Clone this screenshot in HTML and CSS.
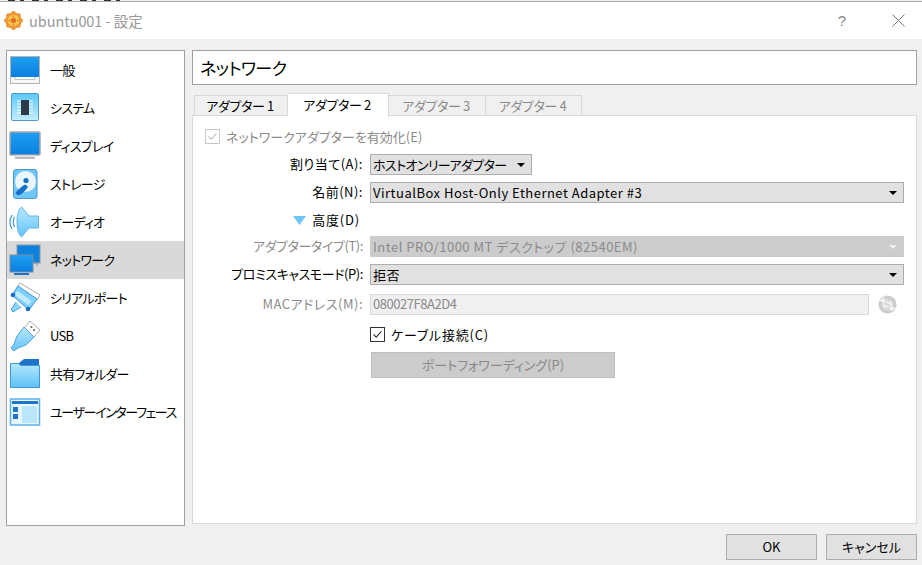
FILE: index.html
```html
<!DOCTYPE html>
<html lang="ja">
<head>
<meta charset="utf-8">
<title>ubuntu001 - 設定</title>
<link rel="stylesheet" href="styles.css">
</head>
<body>
<svg class="defs" width="0" height="0">
  <defs>
    <linearGradient id="screen" x1="0" y1="0" x2="0" y2="1"><stop offset="0" stop-color="#1f9ff2"/><stop offset="1" stop-color="#0a7ee0"/></linearGradient>
    <linearGradient id="light" x1="0" y1="0" x2="0" y2="1"><stop offset="0" stop-color="#5cc8fb"/><stop offset="1" stop-color="#c4edff"/></linearGradient>
    <linearGradient id="cone" x1="0" y1="0" x2="0" y2="1"><stop offset="0" stop-color="#b8e8ff"/><stop offset="1" stop-color="#62c4f8"/></linearGradient>
    <linearGradient id="folder" x1="0" y1="0" x2="0" y2="1"><stop offset="0" stop-color="#b5e8ff"/><stop offset="1" stop-color="#5cc2f6"/></linearGradient>
  </defs>
</svg>
<div class="window">
  <div class="topedge"></div>
  <header class="titlebar">
    <svg class="appicon" viewBox="0 0 20 20"><g fill="#ec9138"><circle cx="10" cy="2.500" r="2.400"/><circle cx="15.300" cy="4.700" r="2.400"/><circle cx="17.500" cy="10" r="2.400"/><circle cx="15.300" cy="15.300" r="2.400"/><circle cx="10" cy="17.500" r="2.400"/><circle cx="4.700" cy="15.300" r="2.400"/><circle cx="2.500" cy="10" r="2.400"/><circle cx="4.700" cy="4.700" r="2.400"/></g><circle cx="10" cy="10" r="8.500" fill="#ee9636"/><circle cx="10" cy="10" r="6" fill="#f9c74a"/><circle cx="10" cy="10" r="2.800" fill="#e2702a"/><circle cx="10" cy="5.600" r=".8" fill="#d85a28"/><circle cx="10" cy="14.400" r=".8" fill="#d85a28"/><circle cx="5.600" cy="10" r=".8" fill="#d85a28"/><circle cx="14.400" cy="10" r=".8" fill="#d85a28"/></svg>
    <span class="wintitle">ubuntu001 - 設定</span>
    <span class="help">?</span>
    <svg class="close" viewBox="0 0 13 13"><path d="M.5.5l12 12M12.500.5l-12 12" stroke="#777" stroke-width="1" fill="none"/></svg>
  </header>
  <div class="content">
    <nav class="sidebar">
      <div class="navitem"><svg class="navicon" viewBox="0 0 32 32"><rect x="1.500" y="2.500" width="29" height="27" fill="#f7f7f7" stroke="#b4b4b4"/><rect x="2" y="3" width="28" height="20" fill="url(#screen)"/><path d="M6 23v2.500h20V23" fill="#fff" stroke="#c4c4c4"/></svg><span>一般</span></div>
      <div class="navitem"><svg class="navicon" viewBox="0 0 32 32"><rect x="2.500" y="1.500" width="27" height="27" rx="1" fill="url(#light)" stroke="#4f97d6"/><path d="M8 9h16M8 12h16M8 15h16M8 18h16M8 21h16" stroke="#fff" stroke-width="1"/><rect x="12" y="8" width="8" height="15" fill="#2d3b49"/></svg><span>システム</span></div>
      <div class="navitem"><svg class="navicon" viewBox="0 0 32 32"><rect x="1" y="2" width="30" height="23" rx="1" fill="url(#screen)" stroke="#a8a8a8" stroke-width="1.500"/><path d="M6 25.500h20v2H6z" fill="#e4e4e4"/><path d="M6 28h20" stroke="#a8a8a8" stroke-width="1.500"/></svg><span>ディスプレイ</span></div>
      <div class="navitem"><svg class="navicon" viewBox="0 0 32 32"><rect x="4.500" y="1.500" width="23.500" height="29" rx="2.500" fill="#70c8f8" stroke="#4f97d6"/><circle cx="16.500" cy="13.500" r="10.500" fill="#eaf7ff"/><circle cx="17" cy="12.500" r="2.600" fill="#1470c8"/><path d="M6.500 25.500c0-2 7-8 10-9l2.500 2.500c-2 3-7 8-10 8.500z" fill="#1470c8"/></svg><span>ストレージ</span></div>
      <div class="navitem"><svg class="navicon" viewBox="0 0 32 32"><path d="M8 16C8 8 10 3 12.500 1L20 10h9.500v12H20l-7.500 9C10 29 8 24 8 16z" fill="url(#cone)" stroke="#62b4ea"/><path d="M5.500 11c-1.500 3-1.500 7 0 10M3 9c-2.500 4.500-2.500 10 0 14" fill="none" stroke="#3f97dd" stroke-width="1.200"/></svg><span>オーディオ</span></div>
      <div class="navitem selected"><svg class="navicon" viewBox="0 0 32 32"><rect x="8" y="1" width="23" height="18" fill="#0e83dd" stroke="#8a99a8"/><path d="M24 19h4v3" stroke="#8a99a8" fill="none"/><rect x="1" y="11" width="23" height="17" fill="url(#screen)" stroke="#7d8c9c"/><path d="M5 30h15" stroke="#1b72c6" stroke-width="2"/></svg><span>ネットワーク</span></div>
      <div class="navitem"><svg class="navicon" viewBox="0 0 32 32"><path d="M11 1l20 12-3 5L8 5z" fill="#fff" stroke="#aaa"/><path d="M9 4l19 13-8 11L3 13z" fill="#7fd0fa" stroke="#3f97dd"/><path d="M7 11l14 10" stroke="#c4ecff" stroke-width="5"/><circle cx="4" cy="13" r="2.300" fill="#1670c6"/><circle cx="19" cy="27" r="2.300" fill="#1670c6"/><path d="M7 20l-3 5-2 2 2 3 3-2 5-3" fill="#8cd6fb" stroke="#3f97dd"/></svg><span>シリアルポート</span></div>
      <div class="navitem"><svg class="navicon" viewBox="0 0 32 32"><path d="M21 1l10 9-6 7-10-9z" fill="#fff" stroke="#a9a9a9"/><circle cx="22.500" cy="7" r="1" fill="#555"/><circle cx="25" cy="10" r="1" fill="#555"/><path d="M15 7l10 10-8 8-8 3-4 3-3-3 3-4 3-8z" fill="url(#cone)" stroke="#4fa6e2"/></svg><span>USB</span></div>
      <div class="navitem"><svg class="navicon" viewBox="0 0 32 32"><path d="M10 5l5-4h15v6H10z" fill="#1f73c8"/><path d="M1.500 5.500h8l2 2h19v22h-29z" fill="url(#folder)" stroke="#3f97dd"/></svg><span>共有フォルダー</span></div>
      <div class="navitem"><svg class="navicon" viewBox="0 0 32 32"><rect x="1.500" y="3" width="29" height="26" fill="#e8f7ff" stroke="#5cb1ea" stroke-width="1.500"/><rect x="3" y="5" width="26" height="3" fill="#1f73c8"/><rect x="4" y="11" width="5" height="5" fill="#1f73c8"/><rect x="4" y="18" width="5" height="5" fill="#1f73c8"/><rect x="13" y="10" width="15" height="17" fill="#b9e6fb"/></svg><span class="longlabel">ユーザーインターフェース</span></div>
    </nav>
    <main class="main">
      <h1 class="pagehead">ネットワーク</h1>
      <div class="tabs">
        <div class="tab">アダプター 1</div>
        <div class="tab active">アダプター 2</div>
        <div class="tab off">アダプター 3</div>
        <div class="tab off">アダプター 4</div>
      </div>
      <section class="pane">
        <div class="form">
          <label class="check enable"><span class="box disabled"><svg viewBox="0 0 15 15"><path d="M3 7.500l3 3 6-6.500" fill="none" stroke="#c4c4c4" stroke-width="1.300"/></svg></span><span class="dim">ネットワークアダプターを有効化(E)</span></label>

          <span class="lbl wide">割り当て(A):</span>
          <div class="field"><div class="combo short"><span class="tight">ホストオンリーアダプター</span><i class="arrow"></i></div></div>

          <span class="lbl wide">名前(N):</span>
          <div class="field"><div class="combo"><span class="wide">VirtualBox Host-Only Ethernet Adapter #3</span><i class="arrow"></i></div></div>

          <span class="lbl adv"><svg class="tri" viewBox="0 0 13 9"><path d="M0 0h13L6.500 9z" fill="#6ec6f5"/></svg><span class="wider">高度(D)</span></span>
          <span></span>

          <span class="lbl dim snug">アダプタータイプ(T):</span>
          <div class="field"><div class="combo disabled"><span class="wide">Intel PRO/1000 MT デスクトップ (82540EM)</span><i class="arrow"></i></div></div>

          <span class="lbl snug">プロミスキャスモード(P):</span>
          <div class="field"><div class="combo"><span class="wide">拒否</span><i class="arrow"></i></div></div>

          <span class="lbl dim wide">MACアドレス(M):</span>
          <div class="field macrow"><div class="input">080027F8A2D4</div><svg class="refresh" viewBox="0 0 20 20"><circle cx="10" cy="10" r="9.500" fill="#cdcdcd"/><circle cx="10" cy="10" r="5.500" fill="#eeeeee"/><path d="M13 6.500c-2-1-6-1-6 2 0 2 6 1 6 3.500 0 2.500-4 2.500-6 1.500" fill="none" stroke="#d2d2d2" stroke-width="1.400"/><path d="M1 6l6-3v5zM19 14l-6 3v-5z" fill="#f6f6f6"/></svg></div>

          <span></span>
          <label class="check cable"><span class="box"><svg viewBox="0 0 15 15"><path d="M3 7.500l3 3 6-6.500" fill="none" stroke="#333" stroke-width="1.300"/></svg></span><span class="wider">ケーブル接続(C)</span></label>

          <span></span>
          <div class="btn portfwd">ポートフォワーディング(P)</div>
        </div>
      </section>
    </main>
  </div>
  <footer class="footer">
    <div class="btn action">OK</div>
    <div class="btn action">キャンセル</div>
  </footer>
</div>
</body>
</html>
```
FILE: styles.css
```css
* { box-sizing: border-box; }
html, body { margin: 0; padding: 0; }
body {
  width: 922px;
  height: 565px;
  overflow: hidden;
  background: #f0f0f0;
  color: #000;
  font-family: "Noto Sans CJK JP", "Noto Sans", sans-serif;
  font-size: 13px;
  font-feature-settings: "palt";
}
.defs { display: block; height: 0; }
.window { display: flex; flex-direction: column; height: 565px; }
.topedge {
  height: 2px;
  border-top: 1px solid #eee;
  background: #aaa;
}
.topedge::before {
  content: "";
  display: block;
  width: 120px;
  height: 1px;
  margin: -1px 0 0 8px;
  background: repeating-linear-gradient(90deg, #333 0 7px, transparent 7px 12px, #333 12px 16px, transparent 16px 24px);
}
.titlebar {
  height: 37px;
  background: #fff;
  display: flex;
  align-items: center;
  padding: 0 17px 0 4px;
}
.appicon { width: 19px; height: 19px; }
.wintitle { margin-left: 6px; font-size: 14.5px; color: #999; letter-spacing: -.05px; }
.help { margin-left: auto; margin-right: 46px; font-size: 15px; color: #888; font-family: "Liberation Sans", sans-serif; }
.close { width: 13px; height: 13px; }

.content { flex: 1; display: flex; padding: 11px 5px 0 6px; gap: 7px; min-height: 0; }
.sidebar {
  width: 179px;
  height: 476px;
  background: #fff;
  border: 1px solid #a0a0a0;
  display: flex;
  flex-direction: column;
}
.navitem { height: 38px; display: flex; align-items: center; gap: 9px; padding-left: 2px; font-size: 13px; letter-spacing: -.75px; white-space: nowrap; }
.navitem span { position: relative; top: -1px; }
.navitem .longlabel { letter-spacing: -1.35px; }
.navitem.selected { background: #d9d9d9; }
.navicon { width: 32px; height: 32px; flex: none; }

.main { flex: 1; display: flex; flex-direction: column; min-width: 0; }
.pagehead {
  margin: 0;
  height: 35px;
  background: #fff;
  border: 1px solid #a0a0a0;
  font-size: 17px;
  font-weight: 400;
  letter-spacing: -.6px;
  line-height: 33px;
  padding-left: 7px;
}
.tabs { display: flex; height: 22px; margin-top: 8px; padding-left: 2px; position: relative; z-index: 1; }
.tab {
  height: 21px;
  margin-top: 2px;
  padding: 0 2px 0 0;
  background: #f0f0f0;
  border: 1px solid #d9d9d9;
  border-left: 0;
  width: 97px;
  text-align: center;
  font-size: 13px;
  letter-spacing: -.4px;
  line-height: 19px;
}
.tab:first-child { width: 94px; border-left: 1px solid #d9d9d9; }
.tab.active { width: 101px; height: 24px; margin-top: 0; background: #fff; border-bottom: 0; line-height: 22px; }
.tab.off { color: #8a8a8a; }
.tab:last-child { width: 96px; }
.pane { height: 409px; background: #fff; border: 1px solid #d9d9d9; }

.form {
  display: grid;
  grid-template-columns: 165px 534px;
  grid-template-rows: 26px 28px 28px 26px 28px 30px 29px 29px 26px;
  padding: 12px 0 0 12px;
  align-items: start;
}
.enable { grid-column: 1 / -1; }
.check { display: flex; align-items: center; gap: 6px; height: 17px; white-space: nowrap; }
.cable { margin-top: 3px; }
.box { width: 15px; height: 15px; border: 1px solid #333; background: #fff; display: block; flex: none; }
.box svg { display: block; width: 13px; height: 13px; }
.box.disabled { border-color: #c8c8c8; }
.dim { color: #8a8a8a; }
.wide { letter-spacing: .5px; }
.wider { letter-spacing: .8px; }
.snug { letter-spacing: -.42px; }
.tight { letter-spacing: -.6px; }
.lbl { height: 21px; line-height: 20px; text-align: right; padding-right: 7px; white-space: nowrap; }
.lbl.adv { display: flex; align-items: center; justify-content: flex-end; padding-right: 10px; gap: 6px; height: 20px; }
.tri { width: 13px; height: 9px; }
.field { height: 21px; }
.combo {
  height: 21px;
  background: #e1e1e1;
  border: 1px solid #adadad;
  display: flex;
  align-items: center;
  justify-content: space-between;
  padding: 0 6px 0 2px;
  line-height: 18px;
  white-space: nowrap;
}
.combo.short { width: 162px; }
.combo.disabled { background: #ccc; border-color: #ccc; color: #8a8a8a; }
.arrow { width: 0; height: 0; border-left: 4px solid transparent; border-right: 4px solid transparent; border-top: 4px solid #000; }
.combo.disabled .arrow { border-top-color: #f0f0f0; }
.macrow { display: flex; align-items: center; gap: 9px; }
.input { width: 499px; height: 21px; background: #f0f0f0; border: 1px solid #d9d9d9; color: #8a8a8a; letter-spacing: -.45px; line-height: 18px; padding-left: 2px; }
.refresh { width: 19px; height: 19px; }
.btn { background: #e1e1e1; border: 1px solid #adadad; text-align: center; }
.portfwd { width: 244px; height: 26px; margin-left: 1px; background: #ccc; border-color: #bfbfbf; color: #8a8a8a; line-height: 24px; }

.footer { height: 31px; display: flex; justify-content: flex-end; gap: 9px; padding: 0 5px 5px 0; flex: none; }
.action { width: 91px; height: 26px; line-height: 24px; }
```
